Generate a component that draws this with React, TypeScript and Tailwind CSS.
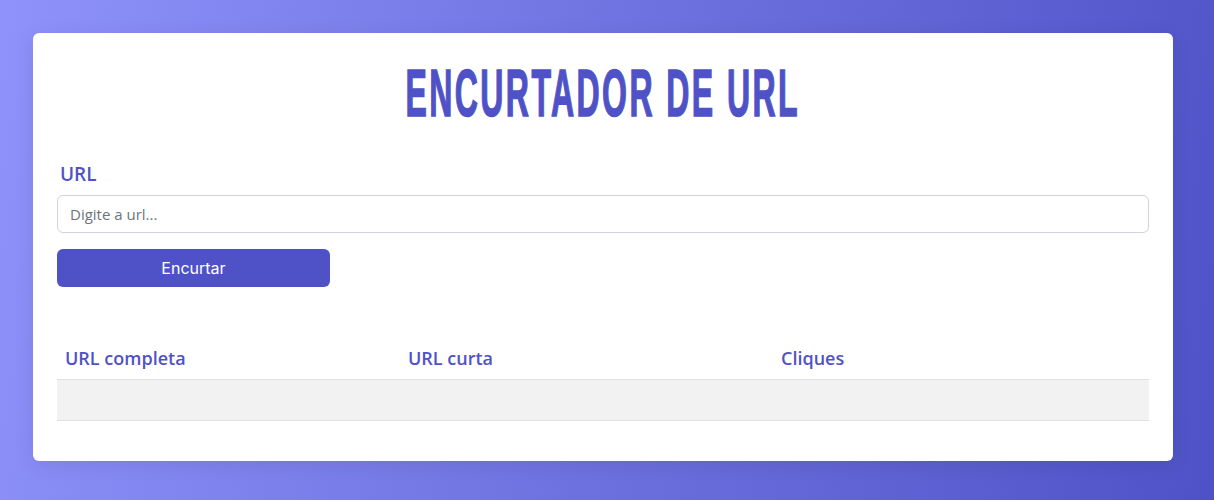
export default function App() {
  const columns = [
    { label: "URL completa", width: "w-[343px]" },
    { label: "URL curta", width: "w-[373px]" },
    { label: "Cliques", width: "flex-1" },
  ];

  return (
    <div className="h-screen w-full bg-[linear-gradient(100deg,#8e92fa,#4e52c6)] p-[33px] font-['Open_Sans',sans-serif]">
      <div className="w-[1140px] rounded-md bg-white px-6 pt-[28px] pb-10 shadow-[0_4px_20px_rgba(0,0,0,0.08)]">
        <h1 className="text-center">
          <span className="inline-block scale-x-[0.485] font-['Liberation_Sans',Arial,sans-serif] text-[66px] leading-[65px] font-bold tracking-[5px] text-[#4f52c7] [-webkit-text-stroke:1.5px_#4f52c7]">
            ENCURTADOR DE URL
          </span>
        </h1>

        <form className="mt-[34px]" onSubmit={(e) => e.preventDefault()}>
          <label className="block pl-[3px] text-[19px] leading-[28px] font-semibold text-[#4f52c7]">
            URL
          </label>
          <input
            type="text"
            placeholder="Digite a url..."
            className="mt-[7px] block h-[38px] w-full rounded-md border border-[#ced4da] px-3 text-[15px] text-gray-700 outline-none placeholder:text-[#6c757d]"
          />
          <button
            type="submit"
            className="mt-4 h-[38px] w-[273px] rounded-md bg-[#4f52c7] font-['Inter',sans-serif] text-base text-white"
          >
            Encurtar
          </button>
        </form>

        <div className="mt-[49px]">
          <div className="flex border-b border-[#dee2e6]">
            {columns.map((col) => (
              <div
                key={col.label}
                className={`${col.width} px-2 pt-[8px] pb-[7px] text-[18px] leading-[28px] font-semibold text-[#4f52c7]`}
              >
                {col.label}
              </div>
            ))}
          </div>
          <div className="h-[41px] border-b border-[#dee2e6] bg-[#f2f2f2]" />
        </div>
      </div>
    </div>
  );
}
